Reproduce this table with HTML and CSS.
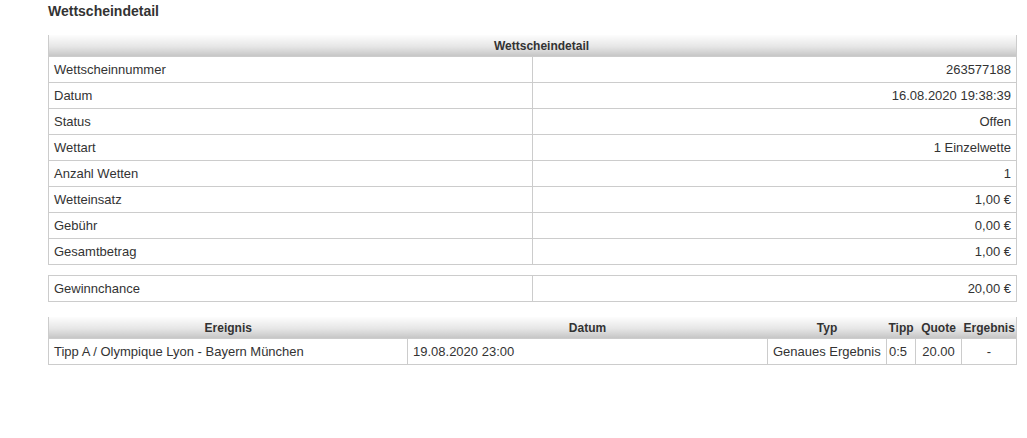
FILE: index.html
```html
<!DOCTYPE html>
<html lang="de">
<head>
<meta charset="utf-8">
<title>Wettscheindetail</title>
<link rel="stylesheet" href="styles.css">
</head>
<body>
<div class="page">
  <h1 class="title">Wettscheindetail</h1>

  <table class="grid details">
    <colgroup><col class="half"><col class="half"></colgroup>
    <thead>
      <tr><th colspan="2" class="head-main">Wettscheindetail</th></tr>
    </thead>
    <tbody>
      <tr><td>Wettscheinnummer</td><td class="r">263577188</td></tr>
      <tr><td>Datum</td><td class="r">16.08.2020 19:38:39</td></tr>
      <tr><td>Status</td><td class="r">Offen</td></tr>
      <tr><td>Wettart</td><td class="r">1 Einzelwette</td></tr>
      <tr><td>Anzahl Wetten</td><td class="r">1</td></tr>
      <tr><td>Wetteinsatz</td><td class="r">1,00 €</td></tr>
      <tr><td>Gebühr</td><td class="r">0,00 €</td></tr>
      <tr><td>Gesamtbetrag</td><td class="r">1,00 €</td></tr>
    </tbody>
  </table>

  <table class="grid chance">
    <colgroup><col class="half"><col class="half"></colgroup>
    <tbody>
      <tr><td>Gewinnchance</td><td class="r">20,00 €</td></tr>
    </tbody>
  </table>

  <table class="grid events">
    <colgroup>
      <col class="c-ev"><col class="c-dt"><col class="c-typ"><col class="c-tipp"><col class="c-quote"><col class="c-erg">
    </colgroup>
    <thead>
      <tr>
        <th>Ereignis</th>
        <th>Datum</th>
        <th>Typ</th>
        <th>Tipp</th>
        <th>Quote</th>
        <th>Ergebnis</th>
      </tr>
    </thead>
    <tbody>
      <tr>
        <td>Tipp A / Olympique Lyon - Bayern München</td>
        <td>19.08.2020 23:00</td>
        <td>Genaues Ergebnis</td>
        <td class="tipp">0:5</td>
        <td class="c">20.00</td>
        <td class="c">-</td>
      </tr>
    </tbody>
  </table>
</div>
</body>
</html>
```

FILE: styles.css
```css
html, body {
  margin: 0;
  padding: 0;
  background: #ffffff;
}

body {
  font-family: "Liberation Sans", Arial, sans-serif;
  color: #333333;
}

.page {
  padding: 2px 0 0 48px;
  width: 968px;
}

.title {
  margin: 0 0 15px 0;
  font-size: 14px;
  line-height: 18px;
  font-weight: bold;
  color: #333333;
}

.grid {
  width: 968px;
  border-collapse: collapse;
  table-layout: fixed;
  font-size: 13px;
}

.grid th {
  height: 21px;
  padding: 0 2px;
  font-size: 12px;
  font-weight: bold;
  color: #333333;
  text-align: center;
  vertical-align: middle;
  background: linear-gradient(to bottom, #fdfdfd 0%, #e6e6e6 55%, #c6c6c6 100%);
  border: none;
}

.grid th:first-child {
  border-left: 1px solid #cccccc;
}

.grid th:last-child {
  border-right: 1px solid #cccccc;
}

.grid th.head-main {
  padding-left: 20px;
  border-left: 1px solid #cccccc;
  border-right: 1px solid #cccccc;
}

.grid td {
  height: 25px;
  padding: 0 5px;
  border: 1px solid #cccccc;
  vertical-align: middle;
  white-space: nowrap;
  overflow: hidden;
  color: #333333;
}

.grid td.r {
  text-align: right;
}

.grid td.c {
  text-align: center;
}

.grid td.tipp {
  padding: 0 2px;
}

.half {
  width: 484px;
}

.chance {
  margin-top: 10px;
}

.events {
  margin-top: 15px;
}

.c-ev { width: 359px; }
.c-dt { width: 360px; }
.c-typ { width: 119px; }
.c-tipp { width: 29px; }
.c-quote { width: 46px; }
.c-erg { width: 55px; }
```
